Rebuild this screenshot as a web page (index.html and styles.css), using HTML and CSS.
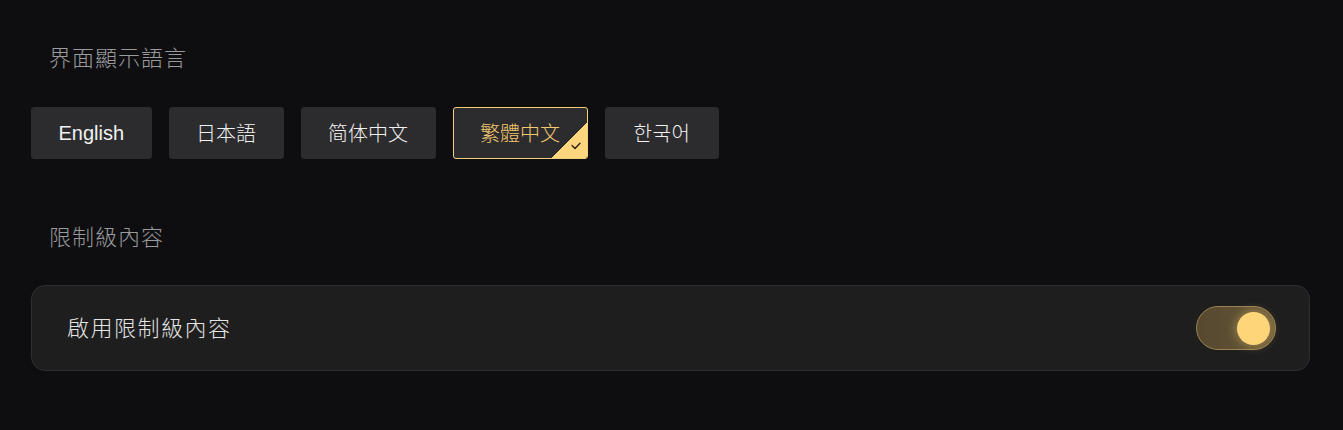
FILE: index.html
```html
<!DOCTYPE html>
<html lang="zh-Hant">
<head>
<meta charset="utf-8">
<link rel="stylesheet" href="styles.css">
</head>
<body>
<main class="page">
  <section class="group">
    <h2 class="group-title">界面顯示語言</h2>
    <div class="lang-list">
      <button class="lang en">English</button>
      <button class="lang">日本語</button>
      <button class="lang">简体中文</button>
      <button class="lang active">繁體中文
        <span class="corner">
          <svg viewBox="0 0 10 8" width="10" height="8"><path d="M1 3.6 L4 6.4 L9 1.2" fill="none" stroke="#2a2418" stroke-width="1.4" stroke-linecap="round" stroke-linejoin="round"/></svg>
        </span>
      </button>
      <button class="lang ko">한국어</button>
    </div>
  </section>
  <section class="group second">
    <h2 class="group-title">限制級內容</h2>
    <div class="card">
      <span class="card-label">啟用限制級內容</span>
      <span class="toggle on"><span class="knob"></span></span>
    </div>
  </section>
</main>
</body>
</html>
```
FILE: styles.css
```css
html, body {
  margin: 0;
  background: #0e0e10;
}
body {
  font-family: "Noto Sans CJK TC", "Liberation Sans", sans-serif;
  color: #e6e6e6;
}
.page {
  padding: 40px 33px 40px 31px;
}
.group-title {
  margin: 0;
  padding-left: 18px;
  font-size: 22px;
  font-weight: 300;
  line-height: 33px;
  letter-spacing: 1px;
  color: #9b9b9d;
}
.lang-list {
  display: flex;
  gap: 17px;
  margin-top: 34px;
}
.lang {
  position: relative;
  height: 52px;
  padding: 0 26.5px;
  border: 1px solid #2c2c2e;
  border-radius: 3px;
  background: #2c2c2e;
  color: #f2f2f2;
  font-family: "Noto Sans CJK TC", "Liberation Sans", sans-serif;
  font-size: 20px;
  font-weight: 300;
  line-height: 48px;
  overflow: hidden;
  cursor: pointer;
}
.lang.en {
  font-family: "Liberation Sans", "Noto Sans CJK TC", sans-serif;
  font-weight: 400;
}
.lang.ko {
  font-family: "Noto Sans CJK KR", sans-serif;
  padding: 0 28px;
  letter-spacing: 0.5px;
}
.lang.active {
  border-color: #f4cf7c;
  color: #f3c86f;
}
.corner {
  position: absolute;
  right: 0;
  bottom: 0;
  width: 36px;
  height: 36px;
  background: linear-gradient(135deg, transparent 50%, #ffd57d 50%);
  display: flex;
  align-items: flex-end;
  justify-content: flex-end;
  padding: 0 6px 8px 0;
  box-sizing: border-box;
}
.corner svg {
  display: block;
}
.second {
  margin-top: 60px;
}
.card {
  margin-top: 33px;
  height: 86px;
  box-sizing: border-box;
  display: flex;
  align-items: center;
  justify-content: space-between;
  padding: 0 33px 0 35px;
  background: #1e1e1f;
  border: 1px solid #2f2f31;
  border-radius: 14px;
}
.card-label {
  font-size: 22px;
  font-weight: 300;
  letter-spacing: 1.5px;
  color: #e4e4e4;
  margin-bottom: 5px;
}
.toggle {
  position: relative;
  width: 80px;
  height: 44px;
  box-sizing: border-box;
  border-radius: 22px;
  border: 1px solid #9a8350;
  background: linear-gradient(90deg, #564930 0%, #5e5034 60%, #6a5a38 100%);
  display: flex;
  align-items: center;
  justify-content: flex-end;
  padding-right: 5px;
}
.knob {
  width: 33px;
  height: 33px;
  border-radius: 50%;
  background: #ffd57a;
  box-shadow: 0 0 10px 2px rgba(255, 213, 122, 0.35);
}
```
